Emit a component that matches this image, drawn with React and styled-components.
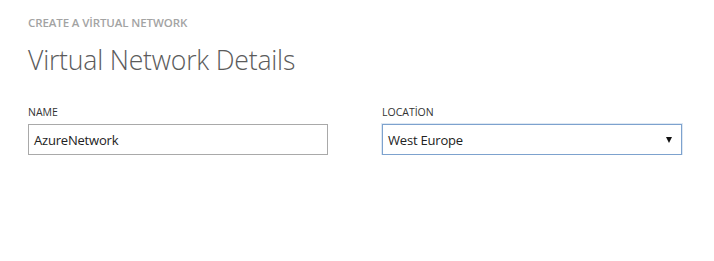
import React from 'react'
import styled, {createGlobalStyle} from 'styled-components'

const GlobalStyle = createGlobalStyle`
  html, body {
    margin: 0;
    padding: 0;
    background: #ffffff;
  }
  body {
    font-family: "Open Sans", "Noto Sans", sans-serif;
  }
`

const Page = styled.div`
  padding: 14px 28px 0 28px;
`

const Eyebrow = styled.div`
  font-size: 11.5px;
  font-weight: 600;
  color: #a3a3a3;
  line-height: 18px;
  letter-spacing: -0.1px;
`

const Title = styled.h1`
  margin: 11px 0 0 0;
  font-size: 26.6px;
  font-weight: 300;
  color: #5b5b5b;
  line-height: 34px;
  letter-spacing: -0.2px;
`

const Fields = styled.div`
  display: grid;
  grid-template-columns: 300px 300px;
  column-gap: 54px;
  margin-top: 28px;
`

const Field = styled.div`
  display: flex;
  flex-direction: column;
`

const Label = styled.label`
  font-size: 10.5px;
  font-weight: 400;
  color: #333333;
  line-height: 14px;
  margin-bottom: 5px;
`

const Box = styled.div`
  box-sizing: border-box;
  height: 31px;
  width: 300px;
  display: flex;
  align-items: center;
  justify-content: space-between;
  padding: 0 9px 0 5px;
  border: 1px solid ${p => (p.$focused ? '#7da2ce' : '#a9a9a9')};
  box-shadow: ${p => (p.$focused ? '0 0 0 1px rgba(125,162,206,0.25)' : 'none')};
  font-size: 13px;
  color: #222222;
  letter-spacing: -0.2px;
`

const Arrow = styled.span`
  width: 0;
  height: 0;
  border-left: 3.5px solid transparent;
  border-right: 3.5px solid transparent;
  border-top: 6px solid #111111;
`

const App = () => {
  return (
    <>
      <GlobalStyle />
      <Page>
        <Eyebrow>CREATE A VİRTUAL NETWORK</Eyebrow>
        <Title>Virtual Network Details</Title>
        <Fields>
          <Field>
            <Label>NAME</Label>
            <Box>AzureNetwork</Box>
          </Field>
          <Field>
            <Label>LOCATİON</Label>
            <Box $focused>
              West Europe
              <Arrow />
            </Box>
          </Field>
        </Fields>
      </Page>
    </>
  )
}

export default App
